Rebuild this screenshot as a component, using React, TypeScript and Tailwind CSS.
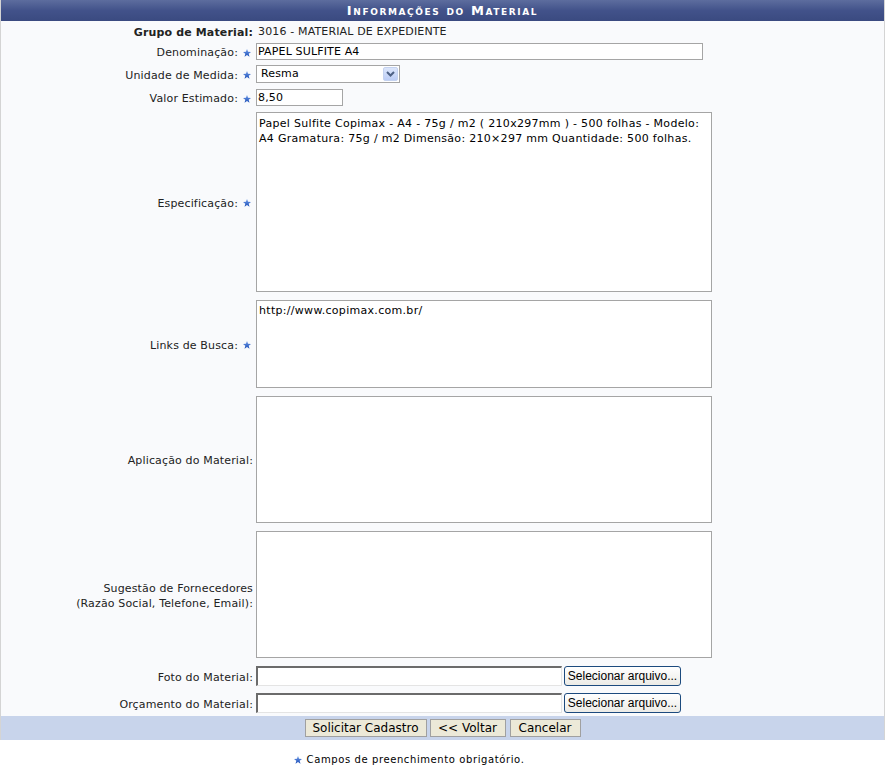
import React from "react";

const Star = () => (
  <svg width="8" height="8" viewBox="0 0 10 10" className="inline-block">
    <defs>
      <linearGradient id="sg" x1="0" y1="0" x2="0" y2="1">
        <stop offset="0" stopColor="#6f9be8" />
        <stop offset="1" stopColor="#1c4fb8" />
      </linearGradient>
    </defs>
    <polygon points="5,0 6.3,3.4 10,3.6 7.1,5.9 8.1,9.6 5,7.5 1.9,9.6 2.9,5.9 0,3.6 3.7,3.4" fill="url(#sg)" />
  </svg>
);

const Label = ({ children, star = true, bold = false }: { children: React.ReactNode; star?: boolean; bold?: boolean }) => (
  <div className={`w-[253px] shrink-0 flex items-center justify-end text-right pr-[1px] pt-[2px] leading-[15px] ${bold ? "font-bold" : ""}`}>
    <span>{children}</span>
    {star && (
      <span className="ml-[5px] mr-[2px] flex items-center">
        <Star />
      </span>
    )}
  </div>
);

const FileRow = ({ label, mt }: { label: string; mt: string }) => (
  <div className={`flex ${mt} h-[20px] items-center`}>
    <Label star={false}>{label}</Label>
    <div className="ml-[2px] flex items-center">
      <div className="w-[306px] h-[20px] bg-white border-t-2 border-l-2 border-t-[#6b6b6b] border-l-[#6b6b6b] border-b border-r border-b-[#e4e4e4] border-r-[#e4e4e4]" />
      <button className="ml-[2px] w-[117px] h-[20px] rounded-[3px] border border-[#1c4a7e] bg-gradient-to-b from-[#ffffff] to-[#ecebe6] text-[12px] text-black [font-family:'Liberation_Sans',Arial,sans-serif] leading-none tracking-normal">
        Selecionar arquivo...
      </button>
    </div>
  </div>
);

export default function App() {
  return (
    <div className="w-[886px] min-h-[767px] bg-white text-[11px] tracking-[0.15px] text-[#222] [font-family:'DejaVu_Sans',Verdana,sans-serif]">
      <div className="w-[885px] border-l border-r border-[#d4d4d4]">
        <div className="h-[21px] flex items-center justify-center bg-gradient-to-b from-[#5d6d9e] via-[#42528a] to-[#3a4a80] text-white font-bold text-[13px] tracking-[1.6px] [font-variant:small-caps]">
          Informações do Material
        </div>
        <div className="bg-[#f9fafc] flex flex-col">
          <div className="flex h-[21px] items-center">
            <Label star={false} bold>
              Grupo de Material:
            </Label>
            <span className="ml-[4px] pt-[2px]">3016 - MATERIAL DE EXPEDIENTE</span>
          </div>
          <div className="flex mt-[1px] h-[17px] items-center">
            <Label>Denominação:</Label>
            <input
              readOnly
              value="PAPEL SULFITE A4"
              className="ml-[2px] w-[447px] h-[17px] border border-[#a5a5a5] bg-white px-[1px] text-[11px] text-black outline-none tracking-[0.15px]"
            />
          </div>
          <div className="flex mt-[5px] h-[18px] items-center">
            <Label>Unidade de Medida:</Label>
            <div className="ml-[2px] w-[144px] h-[18px] border border-[#a5a5a5] bg-white flex items-center justify-between pl-[4px] pr-[1px] text-black">
              <span>Resma</span>
              <div className="w-[15px] h-[14px] rounded-[2px] bg-gradient-to-b from-[#dce6fb] to-[#bccdf6] border border-[#c4d2f0] flex items-center justify-center">
                <svg width="9" height="6" viewBox="0 0 9 6">
                  <polyline points="1,1 4.5,4.5 8,1" fill="none" stroke="#4d6185" strokeWidth="2" />
                </svg>
              </div>
            </div>
          </div>
          <div className="flex mt-[6px] h-[17px] items-center">
            <Label>Valor Estimado:</Label>
            <input
              readOnly
              value="8,50"
              className="ml-[2px] w-[87px] h-[17px] border border-[#a5a5a5] bg-white px-[1px] text-[11px] text-black outline-none tracking-[0.15px]"
            />
          </div>
          <div className="flex mt-[6px] h-[180px] items-center">
            <Label>Especificação:</Label>
            <div className="ml-[2px] w-[456px] h-[180px] border border-[#a5a5a5] bg-white px-[2px] pt-[3px] text-black leading-[15px] tracking-[0.3px]">
              Papel Sulfite Copimax - A4 - 75g / m2 ( 210x297mm ) - 500 folhas - Modelo: A4 Gramatura: 75g / m2 Dimensão: 210×297 mm Quantidade: 500 folhas.
            </div>
          </div>
          <div className="flex mt-[8px] h-[88px] items-center">
            <Label>Links de Busca:</Label>
            <div className="ml-[2px] w-[456px] h-[88px] border border-[#a5a5a5] bg-white px-[2px] pt-[2px] text-black leading-[15px] tracking-[0.3px]">
              http://www.copimax.com.br/
            </div>
          </div>
          <div className="flex mt-[8px] h-[127px] items-center">
            <Label star={false}>Aplicação do Material:</Label>
            <div className="ml-[2px] w-[456px] h-[127px] border border-[#a5a5a5] bg-white" />
          </div>
          <div className="flex mt-[8px] h-[127px] items-center">
            <Label star={false}>
              Sugestão de Fornecedores
              <br />
              (Razão Social, Telefone, Email):
            </Label>
            <div className="ml-[2px] w-[456px] h-[127px] border border-[#a5a5a5] bg-white" />
          </div>
          <FileRow label="Foto do Material:" mt="mt-[8px]" />
          <FileRow label="Orçamento do Material:" mt="mt-[7px]" />
          <div className="h-[3px]" />
        </div>
        <div className="h-[24px] bg-[#c8d4eb] flex items-center justify-center">
          <button className="h-[18px] w-[122px] bg-[#ece9d8] border border-[#a0a0a0] text-[12px] text-black leading-none tracking-normal">
            Solicitar Cadastro
          </button>
          <button className="h-[18px] w-[76px] ml-[3px] bg-[#ece9d8] border border-[#a0a0a0] text-[12px] text-black leading-none tracking-normal">
            &lt;&lt; Voltar
          </button>
          <button className="h-[18px] w-[71px] ml-[4px] bg-[#ece9d8] border border-[#a0a0a0] text-[12px] text-black leading-none tracking-normal">
            Cancelar
          </button>
        </div>
      </div>
      <div className="mt-[12px] flex items-center justify-center pr-[68px] text-[10px] tracking-[0.6px] text-black">
        <Star />
        <span className="ml-[5px]">Campos de preenchimento obrigatório.</span>
      </div>
    </div>
  );
}
